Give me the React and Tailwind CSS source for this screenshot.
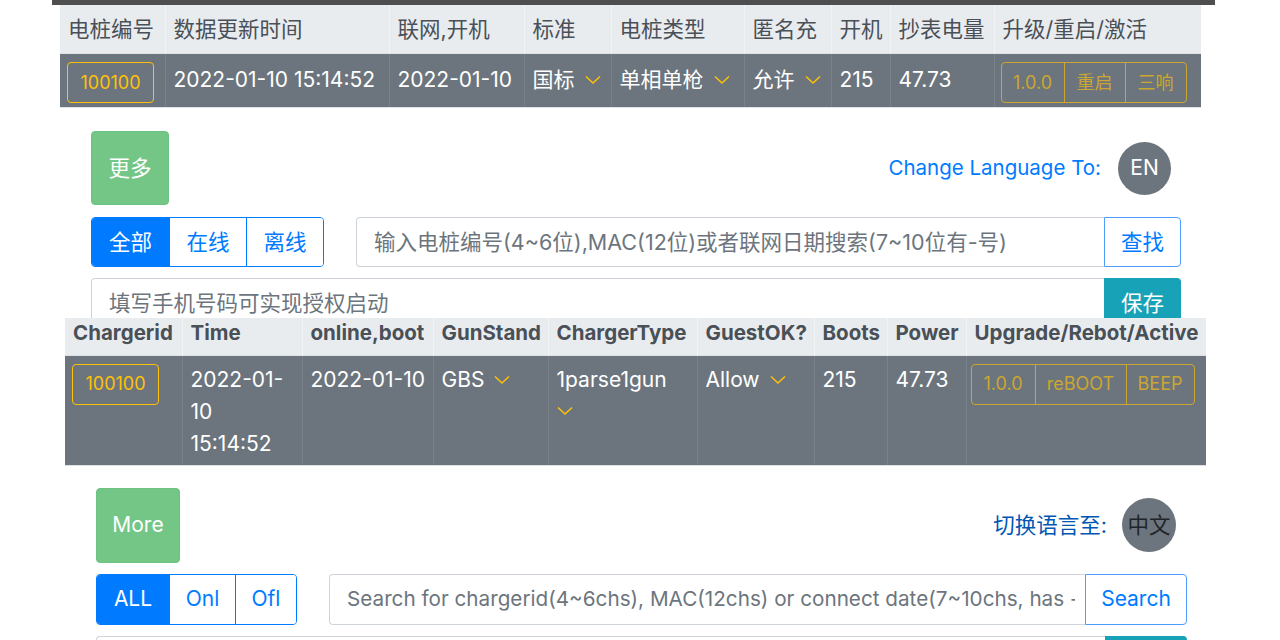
import React from "react";

const zhCols = [
  "w-[105px]",
  "w-[224px]",
  "w-[135px]",
  "w-[87px]",
  "w-[133px]",
  "w-[87px]",
  "w-[59px]",
  "w-[104px]",
  "w-[207px]",
];

const enCols = [
  "w-[117px]",
  "w-[120px]",
  "w-[131px]",
  "w-[115px]",
  "w-[149px]",
  "w-[117px]",
  "w-[73px]",
  "w-[79px]",
  "w-[240px]",
];

function Chevron({ block }) {
  return (
    <svg
      width="16"
      height="10"
      viewBox="0 0 16 10"
      className={block ? "block mt-[10px]" : "inline-block ml-[10px] align-[2px]"}
    >
      <polyline
        points="1,1.5 8,8 15,1.5"
        fill="none"
        stroke="#ffc107"
        strokeWidth="1.5"
      />
    </svg>
  );
}

function IdButton() {
  return (
    <div className="-ml-px w-[87px] h-[41px] border border-[#ffc107] rounded-[4px] text-[#ffc107] text-[18px] flex items-center justify-center">
      100100
    </div>
  );
}

function ActionGroup({ items, shift }) {
  return (
    <div
      className={`inline-flex h-[41px] border border-[#cba630] rounded-[4px] text-[#cba630] text-[18px] ${shift}`}
    >
      {items.map((it, i) => (
        <div
          key={it.label}
          className={`${it.w} flex items-center justify-center ${
            i > 0 ? "border-l border-[#cba630]" : ""
          }`}
        >
          {it.label}
        </div>
      ))}
    </div>
  );
}

function DataTable({ cols, heads, cells, bold, headClass, rowClass, width }) {
  return (
    <table className={`table-fixed border-collapse ${width}`}>
      <colgroup>
        {cols.map((c, i) => (
          <col key={i} className={c} />
        ))}
      </colgroup>
      <thead>
        <tr className={`bg-[#e9ecef] ${headClass}`}>
          {heads.map((h, i) => (
            <th
              key={h}
              className={`text-left align-top px-2 whitespace-nowrap text-[#495057] border-b border-[#dee2e6] ${
                bold ? "font-bold" : "font-normal"
              } ${i > 0 ? "border-l border-l-[#f1f3f5]" : ""}`}
            >
              {h}
            </th>
          ))}
        </tr>
      </thead>
      <tbody>
        <tr className={`bg-[#6c757d] text-white ${rowClass}`}>
          {cells.map((c, i) => (
            <td
              key={i}
              className={`align-top px-2 pt-2 border-b border-[#dee2e6] ${
                i > 0 ? "border-l border-l-[#7a8289]" : ""
              }`}
            >
              {c}
            </td>
          ))}
        </tr>
      </tbody>
    </table>
  );
}

function FilterGroup({ items, size }) {
  return (
    <div className={`flex h-full border border-[#007bff] rounded-[4px] overflow-hidden ${size}`}>
      {items.map((it, i) => (
        <div
          key={it.label}
          className={`${it.w} flex items-center justify-center ${
            i === 0 ? "bg-[#007bff] text-white" : "bg-white text-[#007bff] border-l border-[#007bff]"
          }`}
        >
          {it.label}
        </div>
      ))}
    </div>
  );
}

export default function App() {
  const zhCells = [
    <IdButton />,
    <span className="whitespace-nowrap">2022-01-10 15:14:52</span>,
    "2022-01-10",
    <span className="whitespace-nowrap">
      国标
      <Chevron />
    </span>,
    <span className="whitespace-nowrap">
      单相单枪
      <Chevron />
    </span>,
    <span className="whitespace-nowrap">
      允许
      <Chevron />
    </span>,
    "215",
    "47.73",
    <ActionGroup
      shift="-ml-[2px]"
      items={[
        { label: "1.0.0", w: "w-[62px]" },
        { label: "重启", w: "w-[61px]" },
        { label: "三响", w: "w-[61px]" },
      ]}
    />,
  ];

  const enCells = [
    <IdButton />,
    <span>
      2022-01-
      <br />
      10
      <br />
      15:14:52
    </span>,
    <span className="whitespace-nowrap">2022-01-10</span>,
    <span className="whitespace-nowrap">
      GBS
      <Chevron />
    </span>,
    <span>
      1parse1gun
      <Chevron block />
    </span>,
    <span className="whitespace-nowrap">
      Allow
      <Chevron />
    </span>,
    "215",
    "47.73",
    <ActionGroup
      shift="-ml-[4px]"
      items={[
        { label: "1.0.0", w: "w-[63px]" },
        { label: "reBOOT", w: "w-[91px]" },
        { label: "BEEP", w: "w-[68px]" },
      ]}
    />,
  ];

  return (
    <div className="w-[1280px] h-[640px] overflow-hidden bg-white font-[Inter,'Noto_Sans_CJK_SC',sans-serif]">
      {/* Chinese screen */}
      <div className="h-[318px] overflow-hidden">
        <div className="ml-[52px] w-[1163px] h-[5px] bg-[#4f4f4f]" />
        <div className="ml-[60px] text-[21px]">
          <DataTable
            cols={zhCols}
            width="w-[1141px]"
            heads={[
              "电桩编号",
              "数据更新时间",
              "联网,开机",
              "标准",
              "电桩类型",
              "匿名充",
              "开机",
              "抄表电量",
              "升级/重启/激活",
            ]}
            cells={zhCells}
            headClass="h-[48px] leading-[48px] text-[21.5px]"
            rowClass="h-[54px] leading-[36px]"
          />
        </div>

        <div className="ml-[91px] w-[1090px] mt-[23px]">
          <div className="flex items-center justify-between">
            <div className="w-[78px] h-[74px] bg-[#74c686] border border-[#6cc27f] rounded-[4px] text-white text-[21.5px] flex items-center justify-center">
              更多
            </div>
            <div className="flex items-center mr-[10px]">
              <span className="text-[#007bff] text-[20.5px]">Change Language To:</span>
              <div className="ml-[17px] w-[53px] h-[53px] rounded-full bg-[#6c757d] text-white text-[21px] flex items-center justify-center">
                EN
              </div>
            </div>
          </div>

          <div className="mt-[12px] flex h-[50px]">
            <FilterGroup
              size="text-[21.5px]"
              items={[
                { label: "全部", w: "w-[77px]" },
                { label: "在线", w: "w-[77px]" },
                { label: "离线", w: "w-[77px]" },
              ]}
            />
            <div className="ml-[32px] flex flex-1">
              <input
                className="flex-1 min-w-0 border border-r-0 border-[#ced4da] rounded-l-[4px] px-[17px] text-[21.5px] placeholder:text-[#6c757d] outline-none"
                placeholder="输入电桩编号(4~6位),MAC(12位)或者联网日期搜索(7~10位有-号)"
              />
              <div className="w-[77px] border border-[#4d9dff] rounded-r-[4px] text-[#007bff] text-[21.5px] flex items-center justify-center">
                查找
              </div>
            </div>
          </div>

          <div className="mt-[11px] flex h-[50px]">
            <input
              className="flex-1 min-w-0 border border-r-0 border-[#ced4da] rounded-l-[4px] px-[17px] text-[21.5px] placeholder:text-[#6c757d] outline-none"
              placeholder="填写手机号码可实现授权启动"
            />
            <div className="w-[77px] bg-[#17a2b8] rounded-r-[4px] text-white text-[21.5px] flex items-center justify-center">
              保存
            </div>
          </div>
        </div>
      </div>

      {/* English screen */}
      <div>
        <div className="ml-[65px] text-[21px]">
          <DataTable
            cols={enCols}
            width="w-[1141px]"
            bold
            heads={[
              "Chargerid",
              "Time",
              "online,boot",
              "GunStand",
              "ChargerType",
              "GuestOK?",
              "Boots",
              "Power",
              "Upgrade/Rebot/Active",
            ]}
            cells={enCells}
            headClass="h-[37px] leading-[29px] text-[20.5px]"
            rowClass="h-[110px] leading-[32px]"
          />
        </div>

        <div className="ml-[96px] w-[1091px] mt-[22px]">
          <div className="flex items-center justify-between">
            <div className="w-[84px] h-[75px] bg-[#74c686] border border-[#6cc27f] rounded-[4px] text-white text-[21px] flex items-center justify-center">
              More
            </div>
            <div className="flex items-center mr-[11px]">
              <span className="text-[#0056b3] text-[21.5px]">切换语言至:</span>
              <div className="ml-[15px] w-[54px] h-[54px] rounded-full bg-[#6c757d] text-[#212529] text-[21.5px] flex items-center justify-center">
                中文
              </div>
            </div>
          </div>

          <div className="mt-[11px] flex h-[51px]">
            <FilterGroup
              size="text-[21px]"
              items={[
                { label: "ALL", w: "w-[72px]" },
                { label: "Onl", w: "w-[66px]" },
                { label: "Ofl", w: "w-[61px]" },
              ]}
            />
            <div className="ml-[32px] flex flex-1">
              <input
                className="flex-1 min-w-0 border border-r-0 border-[#ced4da] rounded-l-[4px] pl-[17px] pr-[10px] text-[20.7px] placeholder:text-[#6c757d] outline-none"
                placeholder="Search for chargerid(4~6chs), MAC(12chs) or connect date(7~10chs, has -)"
              />
              <div className="w-[102px] border border-[#4d9dff] rounded-r-[4px] text-[#007bff] text-[21px] flex items-center justify-center">
                Search
              </div>
            </div>
          </div>

          <div className="mt-[11px] flex h-[50px]">
            <div className="flex-1 border border-r-0 border-[#ced4da] rounded-l-[4px]" />
            <div className="w-[82px] bg-[#17a2b8] rounded-r-[4px]" />
          </div>
        </div>
      </div>
    </div>
  );
}
